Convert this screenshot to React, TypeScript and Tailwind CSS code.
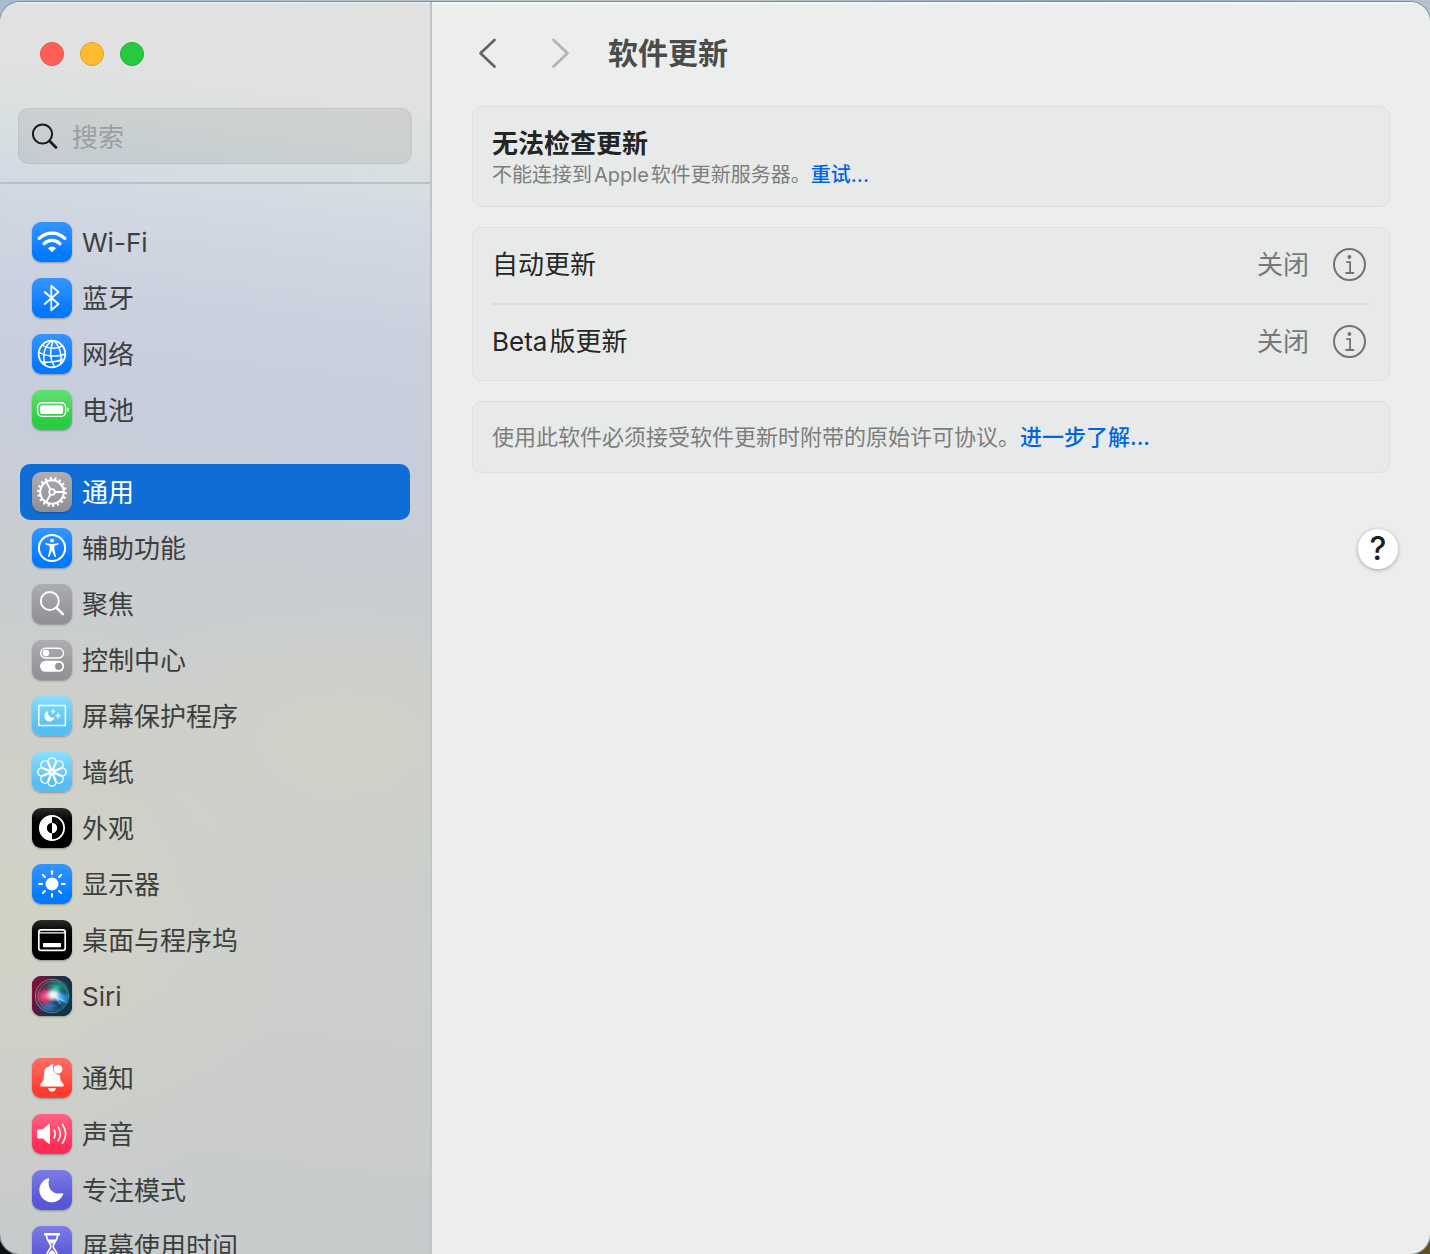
import React from "react";

type IconName =
  | "wifi" | "bluetooth" | "globe" | "battery" | "gear" | "accessibility" | "spotlight"
  | "control" | "screensaver" | "wallpaper" | "appearance" | "display" | "dock" | "siri"
  | "bell" | "sound" | "moon" | "hourglass";

const TILE = {
  blue: "bg-linear-to-b from-[#3395ff] to-[#007aff] to-80%",
  green: "bg-linear-to-b from-[#5fe070] to-[#28cd41] to-80%",
  gray: "bg-linear-to-b from-[#aeadb2] to-[#8e8e93]",
  cyan: "bg-linear-to-b from-[#88defb] to-[#55bef0] to-80%",
  black: "bg-linear-to-b from-[#2c2c2c] to-black to-50%",
  siri: "bg-[#152238]",
  red: "bg-linear-to-b from-[#ff6d66] to-[#ff3b30] to-80%",
  pink: "bg-linear-to-b from-[#ff5f83] to-[#ff2d55] to-80%",
  indigo: "bg-linear-to-b from-[#7d7be6] to-[#5856d6] to-80%",
};

type Item = { label: string; icon: IconName; tile: keyof typeof TILE; active?: boolean };

const GROUPS: Item[][] = [
  [
    { label: "Wi-Fi", icon: "wifi", tile: "blue" },
    { label: "蓝牙", icon: "bluetooth", tile: "blue" },
    { label: "网络", icon: "globe", tile: "blue" },
    { label: "电池", icon: "battery", tile: "green" },
  ],
  [
    { label: "通用", icon: "gear", tile: "gray", active: true },
    { label: "辅助功能", icon: "accessibility", tile: "blue" },
    { label: "聚焦", icon: "spotlight", tile: "gray" },
    { label: "控制中心", icon: "control", tile: "gray" },
    { label: "屏幕保护程序", icon: "screensaver", tile: "cyan" },
    { label: "墙纸", icon: "wallpaper", tile: "cyan" },
    { label: "外观", icon: "appearance", tile: "black" },
    { label: "显示器", icon: "display", tile: "blue" },
    { label: "桌面与程序坞", icon: "dock", tile: "black" },
    { label: "Siri", icon: "siri", tile: "siri" },
  ],
  [
    { label: "通知", icon: "bell", tile: "red" },
    { label: "声音", icon: "sound", tile: "pink" },
    { label: "专注模式", icon: "moon", tile: "indigo" },
    { label: "屏幕使用时间", icon: "hourglass", tile: "indigo" },
  ],
];

const EIGHTHS = [0, 45, 90, 135, 180, 225, 270, 315];

const GLYPHS: Record<IconName, React.ReactNode> = {
  wifi: (
    <>
      <path d="M7.3 16.4A18 18 0 0 1 32.7 16.4" strokeWidth="3.4" />
      <path d="M12.2 21.6A11 11 0 0 1 27.8 21.6" strokeWidth="3.4" />
      <path d="M20 30.3 16 26.2A5.8 5.8 0 0 1 24 26.2Z" fill="#fff" stroke="none" />
    </>
  ),
  bluetooth: <path d="M12.7 14 26.5 26 19.3 32.3V7.7L26.5 14 12.7 26" strokeWidth="1.8" />,
  globe: (
    <g strokeWidth="1.5">
      <circle cx="20" cy="20" r="13.3" strokeWidth="1.8" />
      <path d="M20.5 6.7C12.5 11 9.5 22 13.5 31.5" />
      <path d="M21 6.7C18 15 17.5 25 22.5 33" />
      <path d="M21.5 6.7C27 11 30.5 20 28.5 30" />
      <path d="M10.5 11C15 14.6 25 15.4 30.5 11.8" />
      <path d="M6.8 18C13 22.5 26 23.5 33.2 20" />
      <path d="M9.5 28C16 28.4 24 28.5 32 25" />
    </g>
  ),
  battery: (
    <>
      <rect x="5.6" y="12.8" width="28" height="13.6" rx="4.4" strokeWidth="1.4" />
      <rect x="8.1" y="15.3" width="23" height="8.6" rx="2.2" fill="#fff" stroke="none" />
      <path d="M35.2 17.2Q37 17.9 37 19.6T35.2 22Z" fill="#fff" stroke="none" />
    </>
  ),
  gear: (
    <>
      <circle cx="20" cy="20" r="11.8" strokeWidth="2.1" />
      <circle cx="20" cy="20" r="13.5" strokeWidth="2.8" strokeLinecap="butt" pathLength="36" strokeDasharray="0.9 1.1" />
      <circle cx="20" cy="20" r="2.8" strokeWidth="1.8" />
      <path d="M23 20H31M18.5 17.4 14.2 10M18.5 22.6 14.2 30" strokeWidth="1.9" />
    </>
  ),
  accessibility: (
    <>
      <circle cx="20" cy="20" r="13.1" strokeWidth="2" />
      <circle cx="20" cy="12.6" r="1.9" fill="#fff" stroke="none" />
      <path
        d="M13.6 15Q20 17.2 26.4 15 27.4 15.9 26.2 16.6L22.4 17.8V21.5L24 28.4Q23.4 29.6 22.4 28.6L20 22.6 17.6 28.6Q16.6 29.6 16 28.4L17.6 21.5V17.8L13.8 16.6Q12.6 15.9 13.6 15Z"
        fill="#fff"
        stroke="none"
      />
    </>
  ),
  spotlight: (
    <>
      <circle cx="17.8" cy="17" r="9" strokeWidth="1.9" />
      <path d="M24.6 23.8 31 30.2" strokeWidth="2.5" />
    </>
  ),
  control: (
    <>
      <rect x="8.7" y="8.3" width="22.8" height="9.6" rx="4.8" strokeWidth="1.5" />
      <circle cx="14" cy="13.1" r="3.3" fill="#fff" stroke="none" />
      <rect x="8" y="20.8" width="24.2" height="11" rx="5.5" fill="#fff" stroke="none" />
      <circle cx="26.7" cy="26.3" r="3.6" fill="#929297" stroke="none" />
    </>
  ),
  screensaver: (
    <>
      <rect x="6.8" y="9.6" width="26.6" height="20" rx="0.6" strokeWidth="1.5" strokeLinejoin="miter" />
      <path d="M16 15.2A5.2 5.2 0 1 0 22.5 21.6 5.2 5.2 0 0 1 16 15.2Z" fill="#fff" stroke="none" />
      <path d="M21.2 13.2Q21.5 15.2 23.2 15.5 21.5 15.8 21.2 17.8 20.9 15.8 19.2 15.5 20.9 15.2 21.2 13.2ZM26 17Q26.4 19.3 28.6 19.7 26.4 20.1 26 22.4 25.6 20.1 23.4 19.7 25.6 19.3 26 17Z" fill="#fff" strokeWidth="0.4" />
    </>
  ),
  wallpaper: (
    <g strokeWidth="1.4">
      {EIGHTHS.map((a) => (
        <path
          key={a}
          d="M20 18.6C17.6 15.8 15.9 12.6 15.9 10A4.1 4.1 0 0 1 24.1 10C24.1 12.6 22.4 15.8 20 18.6Z"
          transform={`rotate(${a} 20 20)`}
        />
      ))}
      <circle cx="20" cy="20" r="4" strokeWidth="1" />
    </g>
  ),
  appearance: (
    <>
      <circle cx="20" cy="20" r="12.1" strokeWidth="1.8" />
      <path d="M20 7.5A12.5 12.5 0 0 0 20 32.5Z" fill="#fff" stroke="none" />
      <path d="M20 14.8A5.2 5.2 0 0 0 20 25.2Z" fill="#000" stroke="none" />
      <path d="M20 14.8A5.2 5.2 0 0 1 20 25.2Z" fill="#fff" stroke="none" />
    </>
  ),
  display: (
    <>
      <circle cx="20" cy="20" r="6.5" fill="#fff" stroke="none" />
      {EIGHTHS.map((a) => (
        <path key={a} d="M20 7.2V10" strokeWidth="2.1" transform={`rotate(${a} 20 20)`} />
      ))}
    </>
  ),
  dock: (
    <>
      <rect x="6.8" y="9.8" width="26.4" height="20.6" rx="2.4" strokeWidth="1.7" />
      <path d="M7.2 12.9H32.8" strokeWidth="1.3" />
      <rect x="11" y="23" width="18" height="4.2" rx="0.6" fill="#fff" stroke="none" />
    </>
  ),
  siri: (
    <>
      <defs>
        <linearGradient id="siri-base" x1="0" y1="0.3" x2="1" y2="0.6">
          <stop offset="0" stopColor="#860f3c" />
          <stop offset="0.5" stopColor="#2b2c48" />
          <stop offset="1" stopColor="#063a4b" />
        </linearGradient>
        <radialGradient id="siri-pink">
          <stop offset="0" stopColor="#ff5a90" />
          <stop offset="0.5" stopColor="#f03a72" stopOpacity="0.8" />
          <stop offset="1" stopColor="#e0245e" stopOpacity="0" />
        </radialGradient>
        <radialGradient id="siri-teal">
          <stop offset="0" stopColor="#25cfa4" />
          <stop offset="1" stopColor="#0b7f76" stopOpacity="0" />
        </radialGradient>
        <radialGradient id="siri-blue">
          <stop offset="0" stopColor="#3fbcff" />
          <stop offset="0.5" stopColor="#2a90e6" stopOpacity="0.8" />
          <stop offset="1" stopColor="#1e63c8" stopOpacity="0" />
        </radialGradient>
        <radialGradient id="siri-white">
          <stop offset="0" stopColor="#fff" />
          <stop offset="0.4" stopColor="#eaffff" stopOpacity="0.85" />
          <stop offset="1" stopColor="#bfefff" stopOpacity="0" />
        </radialGradient>
        <linearGradient id="siri-ring" x1="0" y1="0" x2="1" y2="1">
          <stop offset="0" stopColor="#b98f86" />
          <stop offset="0.5" stopColor="#4fc79b" />
          <stop offset="1" stopColor="#3f86c9" />
        </linearGradient>
      </defs>
      <g stroke="none">
        <rect width="40" height="40" fill="url(#siri-base)" />
        <ellipse cx="24" cy="12" rx="14" ry="10" fill="url(#siri-teal)" />
        <ellipse cx="17" cy="30" rx="12" ry="7" fill="url(#siri-blue)" opacity="0.6" />
        <circle cx="13" cy="20.5" r="10" fill="url(#siri-pink)" />
        <circle cx="30" cy="22" r="8" fill="url(#siri-blue)" />
        <ellipse cx="21.5" cy="19" rx="9" ry="7.5" fill="url(#siri-white)" />
        <path d="M20 18 37 27 26 23.5 31 32Z" fill="#e6fbff" opacity="0.45" />
      </g>
      <circle cx="20" cy="20" r="16.6" stroke="url(#siri-ring)" strokeWidth="0.9" opacity="0.85" />
      <circle cx="20.6" cy="20" r="14.6" stroke="url(#siri-ring)" strokeWidth="1" opacity="0.5" />
    </>
  ),
  bell: (
    <>
      <path
        d="M8.2 27.6C8.2 25.4 11.3 24.2 11.6 20.8L12.2 14.6C12.6 10.4 15.4 9 17.2 8.6 17.8 6.4 20.2 5.8 21.6 6.8 19.6 11 21.4 16.4 27.6 16.8L28.3 20.8C28.8 24.2 31.8 25.4 31.8 27.6Q31.8 28.6 30.6 28.6H9.4Q8.2 28.6 8.2 27.6Z"
        fill="#fff"
        stroke="none"
      />
      <path d="M16 30.2H24Q23 33.6 20 33.6T16 30.2Z" fill="#fff" stroke="none" />
      <circle cx="26" cy="11.2" r="4.4" fill="#fff" stroke="none" />
    </>
  ),
  sound: (
    <>
      <path d="M7 15.2H10.8L16.4 10.2Q18 9.2 18 11V28.8Q18 30.6 16.4 29.6L10.8 24.6H7Q5.2 24.6 5.2 22.8V17Q5.2 15.2 7 15.2Z" fill="#fff" stroke="none" />
      <path d="M22.2 16Q24.2 19.9 22.2 23.8" strokeWidth="1.6" />
      <path d="M26.2 13.2Q30.4 19.9 26.2 26.6" strokeWidth="1.6" />
      <path d="M30.4 10.4Q37 19.9 30.4 29.4" strokeWidth="1.6" />
    </>
  ),
  moon: (
    <path d="M16 8.3C17 7.9 17.6 8.6 17.2 9.5 14.6 17.4 20.6 25.6 30 23.2 31.2 23 31.6 23.8 31 24.8A12.3 12.3 0 1 1 16 8.3Z" fill="#fff" stroke="none" />
  ),
  hourglass: (
    <>
      <path d="M13.2 8.2H26.8" strokeWidth="2.6" />
      <path d="M13.2 32.4H26.8" strokeWidth="2.6" />
      <path d="M14.4 9C14.4 15.4 18.8 16.6 18.8 20.2S14.4 25 14.4 31.6M25.6 9C25.6 15.4 21.2 16.6 21.2 20.2S25.6 25 25.6 31.6" strokeWidth="1.7" />
      <path d="M16 13.4H24Q22.6 16 20 17.8 17.4 16 16 13.4ZM20 24Q23.8 26 24.6 31.4H15.4Q16.2 26 20 24Z" fill="#fff" stroke="none" />
    </>
  ),
};

function Tile({ icon, tile }: { icon: IconName; tile: keyof typeof TILE }) {
  return (
    <span className={`size-10 shrink-0 overflow-hidden rounded-[9px] shadow-[0_1px_2px_rgba(0,0,0,0.3)] ${TILE[tile]}`}>
      <svg viewBox="0 0 40 40" className="size-10" fill="none" stroke="#fff" strokeLinecap="round" strokeLinejoin="round" aria-hidden="true">
        {GLYPHS[icon]}
      </svg>
    </span>
  );
}

function Sidebar() {
  return (
    <aside className="flex w-[432px] shrink-0 flex-col overflow-hidden border-r-2 border-[#bfc4c6] bg-[radial-gradient(ellipse_65%_24%_at_5%_73%,#d3d2c6,#d3d2c600),radial-gradient(ellipse_60%_12%_at_80%_59%,#d2d1c9,#d2d1c900),linear-gradient(187deg,#e1e1e1_0%,#e1e1e1_8%,#dbe1e0_12%,#d3dae3_17%,#cbd0de_26%,#c8cddb_36%,#c8cdd3_44%,#cacece_52%,#cbcecb_60%,#cccfcc_75%,#c9cccb_90%,#c8cbcb_100%)] shadow-[inset_0_1px_0_#f4f4f4]">
      <header className="shrink-0 border-b-2 border-[#b9c1c6] px-[18px] pt-10 pb-[18px]">
        <div className="flex gap-4 pl-[22px]">
          <button aria-label="关闭窗口" className="size-6 rounded-full border border-[#ec4d45] bg-[#ff5f57]" />
          <button aria-label="最小化" className="size-6 rounded-full border border-[#e0a32a] bg-[#febc2e]" />
          <button aria-label="缩放" className="size-6 rounded-full border border-[#1fae35] bg-[#28c840]" />
        </div>
        <label className="mt-[42px] flex h-14 items-center gap-3 rounded-[11px] border border-black/5 bg-black/7 px-3">
          <svg viewBox="0 0 28 28" className="size-7 shrink-0" fill="none" stroke="#1c1e1e" strokeLinecap="round" aria-hidden="true">
            <circle cx="11.5" cy="12" r="9.6" strokeWidth="2" />
            <path d="M18.6 19.1 25 25.5" strokeWidth="2.8" />
          </svg>
          <input
            type="search"
            aria-label="搜索"
            placeholder="搜索"
            className="min-w-0 flex-1 bg-transparent pt-0.5 pl-px text-[26px] outline-none placeholder:text-[#9aa0a1]"
          />
        </label>
      </header>
      <nav className="flex flex-col gap-[26px] px-5 pt-[30px]">
        {GROUPS.map((group) => (
          <ul key={group[0].label}>
            {group.map((item) => (
              <li key={item.label}>
                <button
                  className={`flex h-14 w-full items-center gap-[10px] rounded-[10px] px-3 text-left text-[26px] leading-8 ${
                    item.active ? "bg-[#116dd6] text-white" : "text-[#3d3f3f]"
                  }`}
                >
                  <Tile icon={item.icon} tile={item.tile} />
                  <span className="pt-0.5">{item.label}</span>
                </button>
              </li>
            ))}
          </ul>
        ))}
      </nav>
    </aside>
  );
}

function Card({ children, className }: { children: React.ReactNode; className: string }) {
  return <section className={`rounded-[10px] border border-[#dddfde] bg-[#e8eae9] px-[19px] ${className}`}>{children}</section>;
}

function SettingRow({ label }: { label: React.ReactNode }) {
  return (
    <div className="flex h-[75px] items-center gap-6 pr-[3px] pb-0.5">
      <span className="flex-1 text-[26px] text-[#252626]">{label}</span>
      <span className="text-[26px] text-[#777978]">关闭</span>
      <button aria-label="详细信息">
        <svg viewBox="0 0 34 34" className="size-[34px]" fill="none" stroke="#717372" aria-hidden="true">
          <circle cx="16.5" cy="16.5" r="15.5" strokeWidth="2" />
          <circle cx="16.4" cy="9" r="1.9" fill="#717372" stroke="none" />
          <path d="M13.2 14.2H17.1V24.9M12.4 25H21.2" strokeWidth="1.8" />
        </svg>
      </button>
    </div>
  );
}

export default function App() {
  return (
    <div className="h-screen overflow-hidden bg-[linear-gradient(to_right,#a9bccf,#b9c6c9_50%,#8fa3bd_75%,#b4c3cf)] font-['Inter','Noto_Sans_CJK_SC',sans-serif]">
      <div className="h-full bg-[linear-gradient(to_right,#0b0f10_50%,#5a5224_50%)] bg-size-[100%_40px] bg-bottom bg-no-repeat pt-0.5">
        <div className="flex h-full overflow-hidden rounded-[20px] shadow-[0_0_0_1px_#7f8c99]">
          <Sidebar />
          <main className="min-w-0 flex-1 border-t-2 border-[#f5f6f6] bg-[#eceeed]">
            <header className="flex h-[102px] items-center gap-8 px-10 pb-1">
              <div className="flex gap-10">
                <button aria-label="后退">
                  <svg viewBox="0 0 32 32" className="size-8" fill="none" stroke="#636564" strokeWidth="2.7" strokeLinecap="round" strokeLinejoin="round">
                    <path d="M22.5 3 8.5 16.2 22.5 29.5" />
                  </svg>
                </button>
                <button aria-label="前进" disabled>
                  <svg viewBox="0 0 32 32" className="size-8" fill="none" stroke="#b3b5b4" strokeWidth="2.7" strokeLinecap="round" strokeLinejoin="round">
                    <path d="M9.5 3 23.5 16.2 9.5 29.5" />
                  </svg>
                </button>
              </div>
              <h1 className="text-[30px] font-bold text-[#4a4c4b]">软件更新</h1>
            </header>

            <div className="flex flex-col gap-5 px-10">
              <Card className="pt-[21px] pb-4">
                <h2 className="text-[26px] leading-8 font-bold text-[#232424]">无法检查更新</h2>
                <p className="text-xl leading-[30px] text-[#7c7e7d]">
                  不能连接到<span className="mx-0.5">Apple</span>软件更新服务器。
                  <a href="#retry" className="font-medium text-[#0066e0]">重试...</a>
                </p>
              </Card>

              <Card className="">
                <SettingRow label="自动更新" />
                <hr className="border-t-2 border-[#dcdedd]" />
                <SettingRow label={<><span className="mr-0.5">Beta</span>版更新</>} />
              </Card>

              <Card className="py-[19px]">
                <p className="text-[22px] leading-8 text-[#7c7e7d]">
                  使用此软件必须接受软件更新时附带的原始许可协议。
                  <a href="#learn-more" className="font-medium text-[#0066e0]">进一步了解...</a>
                </p>
              </Card>
            </div>

            <div className="flex justify-end pt-14 pr-8">
              <button aria-label="帮助" className="flex size-10 items-center justify-center rounded-full bg-white text-[32px] leading-10 font-medium text-[#1d1d1d] shadow-[0_1px_4px_rgba(0,0,0,0.3)]">
                ?
              </button>
            </div>
          </main>
        </div>
      </div>
    </div>
  );
}
